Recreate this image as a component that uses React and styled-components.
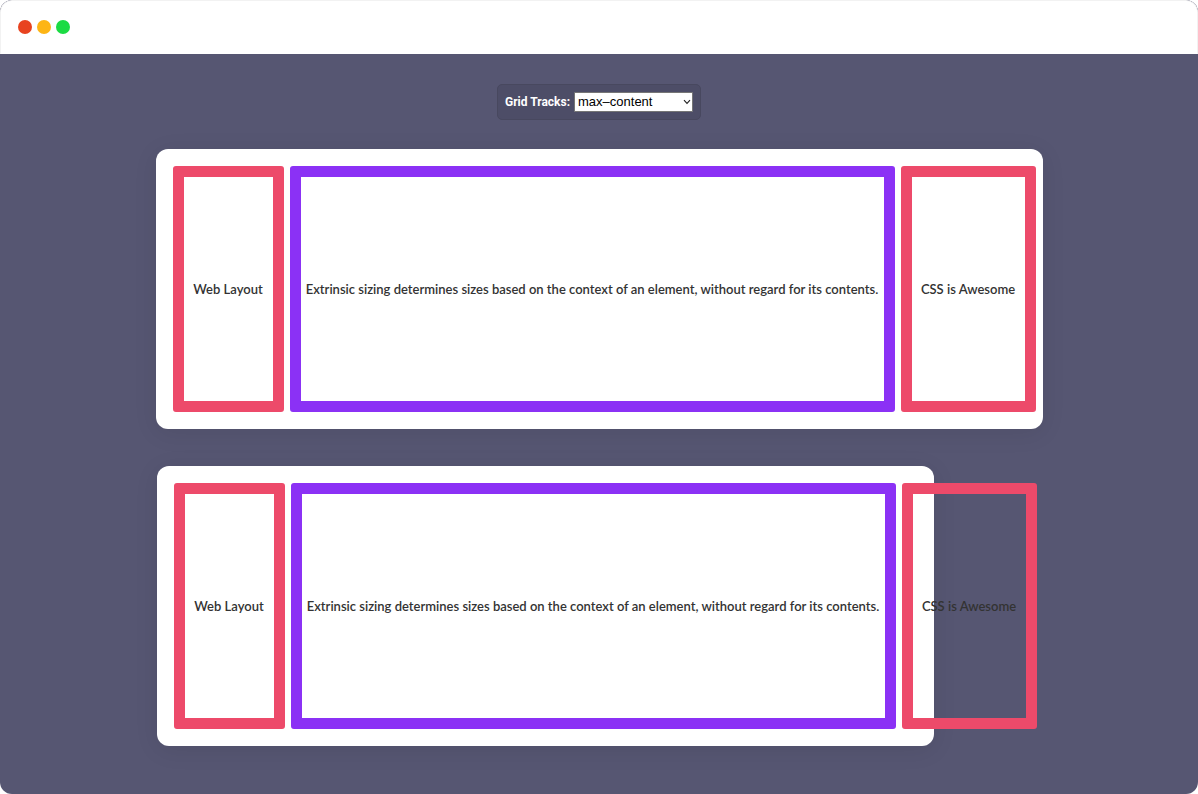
import React, { useState } from "react";
import styled, { createGlobalStyle } from "styled-components";

const GlobalStyle = createGlobalStyle`
  *, *::before, *::after { box-sizing: border-box; }
  body {
    margin: 0;
    background: #fff;
    color: #333;
    font: 600 13px/18px Lato, "Noto Sans", sans-serif;
  }
`;

const Window = styled.div`
  display: flex;
  flex-direction: column;
  min-height: 100vh;
  overflow: hidden;
  border-radius: 12px;
  background: #565672;
`;

const TitleBar = styled.header`
  display: flex;
  align-items: center;
  gap: 5px;
  height: 54px;
  padding: 0 17px;
  background: #fff;
  border: 1px solid #f2f2f2;
  border-bottom-color: #fff;
  border-radius: 12px 12px 0 0;
`;

const Light = styled.span`
  width: 14px;
  height: 14px;
  border-radius: 50%;
  background: ${(p) => p.$color};
`;

const Page = styled.main`
  flex: 1;
  display: flex;
  flex-direction: column;
  align-items: center;
  padding: 30px 24px 48px;
`;

const Toolbar = styled.div`
  display: flex;
  align-items: center;
  gap: 4px;
  height: 36px;
  padding: 0 7px;
  border: 1px solid #48485f;
  border-radius: 5px;
  background: #4d4d67;
  color: #fff;
`;

const ToolbarLabel = styled.label`
  font-family: Roboto, "Noto Sans", sans-serif;
  font-size: 12px;
  font-weight: 700;
`;

const SelectWrap = styled.div`
  display: grid;
  align-items: center;
  width: 119px;

  > * { grid-area: 1 / 1; }
`;

const Select = styled.select`
  appearance: none;
  width: 100%;
  height: 20px;
  margin: 0;
  padding: 0 16px 0 3px;
  border: 1px solid #767676;
  border-radius: 1px;
  background: #fff;
  color: #000;
  font: 400 13px/18px "Liberation Sans", Arial, sans-serif;
`;

const Chevron = styled.svg`
  justify-self: end;
  width: 8px;
  height: 6px;
  margin-right: 2px;
  pointer-events: none;
`;

const Stage = styled.div`
  display: flex;
  flex-direction: column;
  gap: 37px;
  width: 100%;
  max-width: 887px;
  margin-top: 29px;
`;

const Card = styled.section`
  display: grid;
  grid-template-columns: ${(p) =>
    p.$tracks === "max-content" ? "111px 605px 135px" : "1fr 1fr 1fr"};
  gap: 6px;
  width: 100%;
  max-width: ${(p) => (p.$narrow ? "777px" : "none")};
  min-height: 280px;
  margin-left: ${(p) => (p.$narrow ? "1px" : "0")};
  padding: 17px;
  border-radius: 12px;
  background: #fff;
  box-shadow: 0 4px 24px rgba(0, 0, 0, 0.08);
`;

const Cell = styled.div`
  display: flex;
  align-items: center;
  justify-content: center;
  border: 11px solid ${(p) => (p.$accent ? "#8b31f5" : "#ed4a6a")};
  border-radius: 3px;
  text-align: center;
  white-space: ${(p) => (p.$wrap ? "normal" : "nowrap")};
`;

const lights = ["#e8431f", "#fdb515", "#1bdb43"];

function Tracks({ tracks, narrow }) {
  const wrap = tracks !== "max-content";
  return (
    <Card $tracks={tracks} $narrow={narrow}>
      <Cell $wrap={wrap}>Web Layout</Cell>
      <Cell $wrap={wrap} $accent>
        Extrinsic sizing determines sizes based on the context of an element, without regard for its contents.
      </Cell>
      <Cell $wrap={wrap}>CSS is Awesome</Cell>
    </Card>
  );
}

export default function App() {
  const [tracks, setTracks] = useState("max-content");
  return (
    <>
      <GlobalStyle />
      <Window>
        <TitleBar>
          {lights.map((c) => <Light key={c} $color={c} />)}
        </TitleBar>
        <Page>
          <Toolbar>
            <ToolbarLabel htmlFor="tracks">Grid Tracks:</ToolbarLabel>
            <SelectWrap>
              <Select id="tracks" value={tracks} onChange={(e) => setTracks(e.target.value)}>
                <option value="max-content">max–content</option>
                <option value="1fr">1fr</option>
              </Select>
              <Chevron viewBox="0 0 8 6" fill="none" stroke="#222" strokeWidth="1.1" aria-hidden="true">
                <path d="M1 1.2 4 4.4 7 1.2" />
              </Chevron>
            </SelectWrap>
          </Toolbar>
          <Stage>
            <Tracks tracks={tracks} />
            <Tracks tracks={tracks} narrow />
          </Stage>
        </Page>
      </Window>
    </>
  );
}
